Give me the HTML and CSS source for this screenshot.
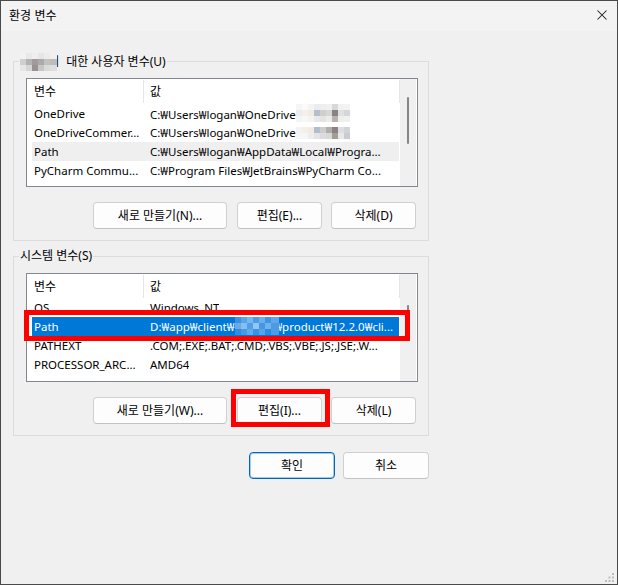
FILE: index.html
```html
<!DOCTYPE html>
<html lang="ko">
<head>
<meta charset="utf-8">
<title>환경 변수</title>
<link rel="stylesheet" href="styles.css">
</head>
<body>
<div class="window">
  <div class="titlebar">
    <span class="title">환경 변수</span>
    <svg class="close" width="10" height="10" viewBox="0 0 10 10"><path d="M0.5 0.5L9.5 9.5M9.5 0.5L0.5 9.5" stroke="#1b1b1b" stroke-width="1.05" fill="none"/></svg>
  </div>
  <div class="content">
    <fieldset class="group">
      <legend><span class="mosaic mosaic-legend"></span><span class="legend-hidden">에</span> 대한 사용자 변수(U)</legend>
      <div class="listbox">
        <div class="list">
          <div class="lhead">
            <div class="hc1">변수</div>
            <div class="sep"></div>
            <div class="hc2">값</div>
            <div class="sep"></div>
          </div>
          <div class="rows">
            <div class="row"><div class="rc1">OneDrive</div><div class="rc2">C:₩Users₩logan₩OneDrive<span class="mosaic mosaic-od1"></span></div></div>
            <div class="row"><div class="rc1">OneDriveCommer...</div><div class="rc2">C:₩Users₩logan₩OneDrive<span class="mosaic mosaic-od2"></span></div></div>
            <div class="row hover"><div class="rc1">Path</div><div class="rc2">C:₩Users₩logan₩AppData₩Local₩Progra...</div></div>
            <div class="row"><div class="rc1">PyCharm Commu...</div><div class="rc2">C:₩Program Files₩JetBrains₩PyCharm Co...</div></div>
          </div>
        </div>
        <div class="scrollbar"><div class="thumb thumb-user"></div></div>
      </div>
      <div class="btns">
        <button class="btn btn-wide">새로 만들기(N)...</button>
        <button class="btn">편집(E)...</button>
        <button class="btn">삭제(D)</button>
      </div>
    </fieldset>

    <fieldset class="group group-sys">
      <legend>시스템 변수(S)</legend>
      <div class="listbox">
        <div class="list">
          <div class="lhead lhead-tall">
            <div class="hc1">변수</div>
            <div class="sep"></div>
            <div class="hc2">값</div>
            <div class="sep"></div>
          </div>
          <div class="rows">
            <div class="rows-scroll">
              <div class="row"><div class="rc1">OS</div><div class="rc2">Windows_NT</div></div>
              <div class="row selected"><div class="rc1">Path</div><div class="rc2">D:₩app₩client₩<span class="mosaic mosaic-sys"></span>₩product₩12.2.0₩cli...</div></div>
              <div class="row"><div class="rc1">PATHEXT</div><div class="rc2">.COM;.EXE;.BAT;.CMD;.VBS;.VBE;.JS;.JSE;.W...</div></div>
              <div class="row"><div class="rc1">PROCESSOR_ARC...</div><div class="rc2">AMD64</div></div>
            </div>
          </div>
        </div>
        <div class="scrollbar"><div class="thumb thumb-sys"></div></div>
      </div>
      <div class="btns">
        <button class="btn btn-wide">새로 만들기(W)...</button>
        <button class="btn">편집(I)...</button>
        <button class="btn">삭제(L)</button>
      </div>
    </fieldset>

    <div class="footer">
      <button class="btn btn-foot btn-default">확인</button>
      <button class="btn btn-foot">취소</button>
    </div>
  </div>

  <div class="redbox redbox-row"></div>
  <div class="redbox redbox-btn"></div>

  <svg class="grip" width="9" height="9" viewBox="0 0 9 9">
    <rect x="7" y="0" width="2" height="2" fill="#bdbdbd"/>
    <rect x="3.5" y="3.5" width="2" height="2" fill="#bdbdbd"/>
    <rect x="7" y="3.5" width="2" height="2" fill="#bdbdbd"/>
    <rect x="0" y="7" width="2" height="2" fill="#bdbdbd"/>
    <rect x="3.5" y="7" width="2" height="2" fill="#bdbdbd"/>
    <rect x="7" y="7" width="2" height="2" fill="#bdbdbd"/>
  </svg>
</div>
</body>
</html>
```
FILE: styles.css
```css
* { box-sizing: border-box; }

html, body {
  margin: 0;
  padding: 0;
}

body {
  width: 618px;
  height: 585px;
  overflow: hidden;
  font-family: "Noto Sans", "Noto Sans CJK KR", sans-serif;
  font-size: 12px;
  color: #000;
  background: #f0f0f0;
}

.window {
  position: relative;
  width: 618px;
  height: 585px;
  border: 1px solid #4a4a4a;
  background: #f0f0f0;
  display: flex;
  flex-direction: column;
}

/* title bar */
.titlebar {
  height: 30px;
  flex: none;
  background: #f3f3f3;
  display: flex;
  align-items: center;
  justify-content: space-between;
  padding: 0 10px 0 8px;
}

.title {
  font-family: "Noto Sans CJK KR", sans-serif;
  font-size: 12px;
  line-height: 16px;
  margin-bottom: 2px;
}

.close {
  display: block;
  margin-bottom: 2px;
}

/* content */
.content {
  padding: 22px 0 0 12px;
}

.group {
  width: 416px;
  margin: 0;
  padding: 9px 10px 11px 12px;
  border: 1px solid #dcdcdc;
  min-width: 0;
}

.group-sys {
  margin-top: 7px;
}

.group legend {
  margin-left: -7px;
  padding: 0 1px;
  line-height: 16px;
  height: 16px;
  white-space: nowrap;
}

.legend-hidden {
  margin-right: 4px;
}

/* list view */
.listbox {
  display: flex;
  height: 109px;
  border: 1px solid #838790;
  background: #fff;
}

.list {
  width: 373px;
  display: flex;
  flex-direction: column;
  overflow: hidden;
}

.lhead {
  flex: none;
  display: flex;
  height: 25px;
  line-height: 25px;
  background: #fff;
}

.lhead-tall {
  height: 30px;
}

.hc1 {
  width: 116px;
  padding-left: 7px;
}

.hc2 {
  width: 255px;
  padding-left: 6px;
}

.sep {
  width: 1px;
  height: 23px;
  margin-top: 1px;
  background: #e5e5e5;
}

.rows {
  flex: 1;
  overflow: hidden;
  font-size: 11.5px;
}

.rows-scroll {
  margin-top: -6px;
}

.row {
  display: flex;
  height: 19px;
  line-height: 19px;
  margin-left: 5px;
  width: 367px;
  white-space: nowrap;
}

.row.hover {
  background: #efefef;
}

.row.selected {
  background: #0078d7;
  color: #fff;
}

.rc1 {
  width: 111px;
  padding-left: 2px;
  overflow: hidden;
}

.rc2 {
  padding-left: 7px;
  overflow: hidden;
}

/* scrollbar */
.scrollbar {
  width: 16px;
  margin-right: 1px;
  background: #f0f0f0;
}

.thumb {
  width: 2px;
  margin-left: 7px;
  background: #868686;
  border-radius: 1px;
}

.thumb-user {
  margin-top: 18px;
  height: 47px;
}

.thumb-sys {
  margin-top: 31px;
  height: 12px;
}

/* mosaics (privacy blur) */
.mosaic {
  display: inline-block;
}

.mosaic-legend {
  width: 37px;
  height: 18px;
  vertical-align: -5px;
  margin-right: -9px;
  position: relative;
  z-index: 1;
  background:
    linear-gradient(90deg, #f2f2f2 0 6px, #e9e9e9 6px 12px, #eeeeee 12px 18px, #e6e6e6 18px 24px, #ececec 24px 30px, #f0f0f0 30px) 0 0 / 100% 6px no-repeat,
    linear-gradient(90deg, #cfcfcf 0 6px, #b7b2b2 6px 12px, #a29a9a 12px 18px, #aeaaaa 18px 24px, #c2c2c2 24px 30px, #bcbcbc 30px) 0 6px / 100% 6px no-repeat,
    linear-gradient(90deg, #e6e6e6 0 6px, #d6d6d6 6px 12px, #9a9292 12px 18px, #c6c6c6 18px 24px, #dadada 24px 30px, #dedede 30px) 0 12px / 100% 6px no-repeat;
}

.mosaic-od1 {
  width: 54px;
  height: 18px;
  vertical-align: -3px;
  background:
    linear-gradient(90deg, #f6f6f6 0 6px, #fafafa 6px 12px, #f4f4f4 12px 18px, #e9ecf0 18px 24px, #eeeeee 24px 30px, #f0f0f0 30px 36px, #d8d8d8 36px 42px, #f2f2f2 42px 48px, #f3f3f3 48px) 0 0 / 100% 6px no-repeat,
    linear-gradient(90deg, #ececec 0 6px, #f5efe7 6px 12px, #f1ebe3 12px 18px, #b6bdcb 18px 24px, #cfcfcf 24px 30px, #d5d8d3 30px 36px, #8b8288 36px 42px, #e0e0e0 42px 48px, #d3d6dc 48px) 0 6px / 100% 6px no-repeat,
    linear-gradient(90deg, #f4f4f4 0 6px, #f7f7f7 6px 12px, #f3f3f3 12px 18px, #e6e8ec 18px 24px, #e4e4e4 24px 30px, #ebebeb 30px 36px, #b9b3b0 36px 42px, #eeeeee 42px 48px, #f0f0f0 48px) 0 12px / 100% 6px no-repeat;
}

.mosaic-od2 {
  width: 54px;
  height: 12px;
  vertical-align: -2px;
  background:
    linear-gradient(90deg, #f3f3f3 0 6px, #f5efe7 6px 12px, #f1ebe3 12px 18px, #b4bccb 18px 24px, #cdcdcd 24px 30px, #b0adad 30px 36px, #8b8288 36px 42px, #dedede 42px 48px, #d0d4da 48px) 0 0 / 100% 6px no-repeat,
    linear-gradient(90deg, #f6f6f6 0 6px, #f6f6f6 6px 12px, #eeeeee 12px 18px, #e2e4e8 18px 24px, #dcdcdc 24px 30px, #d8d8d8 30px 36px, #a39c97 36px 42px, #e8e8e8 42px 48px, #c8ccd2 48px) 0 6px / 100% 6px no-repeat;
}

.mosaic-sys {
  width: 44px;
  height: 18px;
  vertical-align: -4px;
  margin-left: 1px;
  margin-right: -5px;
  position: relative;
  z-index: 1;
  background:
    linear-gradient(90deg, #3a92e2 0 6px, #5aa4e8 6px 12px, #78b6ee 12px 18px, #4c9ce6 18px 24px, #6aaeeb 24px 30px, #3f95e3 30px 36px, #5ea7e9 36px) 0 0 / 100% 6px no-repeat,
    linear-gradient(90deg, #66abea 0 6px, #86bef0 6px 12px, #519fe6 12px 18px, #94c6f2 18px 24px, #4696e3 24px 30px, #70b2ec 30px 36px, #4a9ae4 36px) 0 6px / 100% 6px no-repeat,
    linear-gradient(90deg, #2f8ce0 0 6px, #4898e4 6px 12px, #64a9ea 12px 18px, #3a91e1 18px 24px, #58a2e8 24px 30px, #2e8bdf 30px 36px, #4d9ce5 36px) 0 12px / 100% 6px no-repeat;
}

/* buttons */
.btns {
  display: flex;
  justify-content: flex-end;
  gap: 9px;
  margin-top: 15px;
  padding-right: 2px;
}

.btn {
  height: 27px;
  width: 85px;
  padding: 0;
  margin: 0;
  font-family: "Noto Sans", "Noto Sans CJK KR", sans-serif;
  font-size: 12px;
  line-height: 25px;
  color: #000;
  background: #fdfdfd;
  border: 1px solid #d0d0d0;
  border-bottom-color: #c2c2c2;
  border-radius: 4px;
  text-align: center;
}

.btn-wide {
  width: 134px;
  margin-right: 1px;
}

.footer {
  display: flex;
  justify-content: flex-end;
  gap: 8px;
  width: 416px;
  margin-top: 16px;
}

.btn-foot {
  width: 86px;
}

.btn-default {
  border-color: #0067c0;
  box-shadow: inset 0 0 0 1px rgba(0, 103, 192, 0.35);
}

/* annotations drawn over the dialog */
.redbox {
  position: absolute;
  border: 5px solid #ff0000;
}

.redbox-row {
  left: 23px;
  top: 309px;
  width: 386px;
  height: 31px;
}

.redbox-btn {
  left: 230px;
  top: 388px;
  width: 99px;
  height: 38px;
}

.grip {
  position: absolute;
  left: 604px;
  top: 572px;
}
```
